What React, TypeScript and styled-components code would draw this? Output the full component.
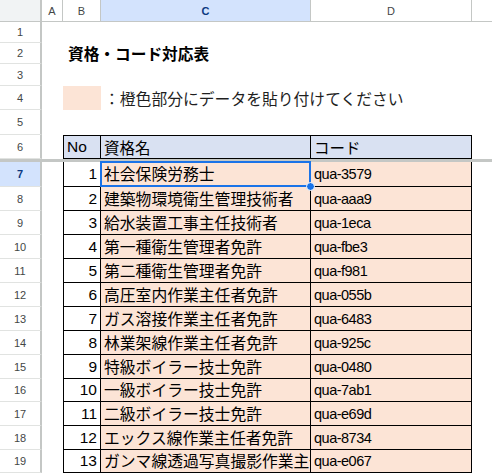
import React from 'react';
import styled, { createGlobalStyle, css } from 'styled-components';

const GlobalStyle = createGlobalStyle`
  html, body {
    margin: 0;
    padding: 0;
    background: #fff;
  }
  body {
    font-family: 'Liberation Sans', 'Noto Sans CJK JP', sans-serif;
  }
`;

const COLS = [21, 38, 210, 161, 62];
const TOP_ROWS = [21, 21, 22, 24, 25, 24];
const DATA_ROWS = [25, 24, 24, 24, 24, 24, 24, 24, 24, 23, 24, 24, 23];

const qualifications = [
  { no: 1, name: '社会保険労務士', code: 'qua-3579' },
  { no: 2, name: '建築物環境衛生管理技術者', code: 'qua-aaa9' },
  { no: 3, name: '給水装置工事主任技術者', code: 'qua-1eca' },
  { no: 4, name: '第一種衛生管理者免許', code: 'qua-fbe3' },
  { no: 5, name: '第二種衛生管理者免許', code: 'qua-f981' },
  { no: 6, name: '高圧室内作業主任者免許', code: 'qua-055b' },
  { no: 7, name: 'ガス溶接作業主任者免許', code: 'qua-6483' },
  { no: 8, name: '林業架線作業主任者免許', code: 'qua-925c' },
  { no: 9, name: '特級ボイラー技士免許', code: 'qua-0480' },
  { no: 10, name: '一級ボイラー技士免許', code: 'qua-7ab1' },
  { no: 11, name: '二級ボイラー技士免許', code: 'qua-e69d' },
  { no: 12, name: 'エックス線作業主任者免許', code: 'qua-8734' },
  { no: 13, name: 'ガンマ線透過写真撮影作業主任者免許', code: 'qua-e067' },
];

const Sheet = styled.div`
  width: 492px;
  height: 475px;
  overflow: hidden;
  display: flex;
  flex-direction: column;
  background: #fff;
`;

const Row = styled.div<{ $h: number }>`
  display: flex;
  height: ${(p) => p.$h}px;
  flex: none;
`;

const Corner = styled.div`
  width: 42px;
  flex: none;
  box-sizing: border-box;
  background: #f1f3f4;
  border-right: 2px solid #c4c7c5;
  border-bottom: 1px solid #c4c7c5;
`;

const ColHead = styled.div<{ $w: number; $active?: boolean }>`
  width: ${(p) => p.$w}px;
  flex: none;
  box-sizing: border-box;
  display: flex;
  align-items: center;
  justify-content: center;
  font-family: 'Liberation Sans', Arial, sans-serif;
  font-size: 11px;
  color: #444746;
  background: ${(p) => (p.$active ? '#d3e3fd' : '#fff')};
  border-right: 1px solid #c4c7c5;
  border-bottom: 1px solid #c4c7c5;
  ${(p) =>
    p.$active &&
    css`
      color: #0b3880;
      font-weight: 700;
    `}
`;

const RowHead = styled.div<{ $active?: boolean }>`
  width: 42px;
  flex: none;
  box-sizing: border-box;
  display: flex;
  align-items: center;
  justify-content: center;
  font-family: 'Liberation Sans', Arial, sans-serif;
  font-size: 11px;
  color: #444746;
  background: ${(p) => (p.$active ? '#d3e3fd' : '#fff')};
  border-right: 2px solid #c4c7c5;
  border-bottom: 1px solid #e1e3e1;
  ${(p) =>
    p.$active &&
    css`
      color: #0b3880;
      font-weight: 700;
    `}
`;

const FreezeBar = styled.div`
  height: 3px;
  flex: none;
  background: #c4c7c5;
`;

type CellProps = {
  $w: number;
  $fill?: string;
  $table?: boolean;
  $first?: boolean;
  $top?: boolean;
  $align?: 'left' | 'right';
  $clip?: boolean;
};

const Cell = styled.div<CellProps>`
  position: relative;
  width: ${(p) => p.$w}px;
  flex: none;
  box-sizing: border-box;
  display: flex;
  align-items: center;
  justify-content: ${(p) => (p.$align === 'right' ? 'flex-end' : 'flex-start')};
  padding: 0 3px;
  white-space: nowrap;
  overflow: ${(p) => (p.$clip ? 'hidden' : 'visible')};
  background: ${(p) => p.$fill || 'transparent'};
  color: #000;
  ${(p) =>
    p.$table &&
    css`
      border-right: 1px solid #000;
      border-bottom: 1px solid #000;
    `}
  ${(p) => p.$first && 'border-left: 1px solid #000;'}
  ${(p) => p.$top && 'border-top: 1px solid #000;'}
`;

const Title = styled.span`
  font-family: 'Noto Sans CJK JP', sans-serif;
  font-size: 15.7px;
  font-weight: 700;
  padding-left: 2px;
  position: relative;
  z-index: 1;
`;

const Note = styled.span`
  font-family: 'Noto Sans CJK JP', sans-serif;
  font-size: 15.8px;
  color: #1f1f1f;
  position: relative;
  z-index: 1;
`;

const JaText = styled.span`
  font-family: 'Noto Sans CJK JP', sans-serif;
  font-size: 15.8px;
  line-height: 1;
`;

const NumText = styled.span`
  font-family: 'Liberation Sans', Arial, sans-serif;
  font-size: 15.5px;
`;

const CodeText = styled.span`
  font-family: 'Liberation Sans', Arial, sans-serif;
  font-size: 14.5px;
  letter-spacing: -0.5px;
`;

const HeadText = styled.span`
  font-family: 'Liberation Sans', 'Noto Sans CJK JP', sans-serif;
  font-size: 15.5px;
`;

const Selection = styled.div`
  position: absolute;
  left: -1px;
  top: -1px;
  right: -1px;
  bottom: -1px;
  border: 2px solid #1a73e8;
  pointer-events: none;
`;

const Handle = styled.div`
  position: absolute;
  right: -5px;
  bottom: -5px;
  width: 7px;
  height: 7px;
  border-radius: 50%;
  background: #1a73e8;
  border: 1px solid #fff;
  z-index: 2;
`;

const ORANGE = '#fce4d6';
const BLUE = '#d9e1f2';

const App = () => {
  const letters = ['A', 'B', 'C', 'D', ''];

  return (
    <>
      <GlobalStyle />
      <Sheet>
        <Row $h={22}>
          <Corner />
          {COLS.map((w, i) => (
            <ColHead key={i} $w={w} $active={letters[i] === 'C'}>
              {letters[i]}
            </ColHead>
          ))}
        </Row>

        <Row $h={TOP_ROWS[0]}>
          <RowHead>1</RowHead>
        </Row>
        <Row $h={TOP_ROWS[1]}>
          <RowHead>2</RowHead>
          <Cell $w={COLS[0]} />
          <Cell $w={COLS[1]}>
            <Title>資格・コード対応表</Title>
          </Cell>
        </Row>
        <Row $h={TOP_ROWS[2]}>
          <RowHead>3</RowHead>
        </Row>
        <Row $h={TOP_ROWS[3]}>
          <RowHead>4</RowHead>
          <Cell $w={COLS[0]} />
          <Cell $w={COLS[1]} $fill={ORANGE} />
          <Cell $w={COLS[2]}>
            <Note>：橙色部分にデータを貼り付けてください</Note>
          </Cell>
        </Row>
        <Row $h={TOP_ROWS[4]}>
          <RowHead>5</RowHead>
        </Row>
        <Row $h={TOP_ROWS[5]}>
          <RowHead>6</RowHead>
          <Cell $w={COLS[0]} />
          <Cell $w={COLS[1]} $fill={BLUE} $table $first $top>
            <HeadText>No</HeadText>
          </Cell>
          <Cell $w={COLS[2]} $fill={BLUE} $table $top>
            <HeadText>資格名</HeadText>
          </Cell>
          <Cell $w={COLS[3]} $fill={BLUE} $table $top>
            <HeadText>コード</HeadText>
          </Cell>
        </Row>

        <FreezeBar />

        {qualifications.map((q, i) => (
          <Row key={q.no} $h={DATA_ROWS[i]}>
            <RowHead $active={i === 0}>{i + 7}</RowHead>
            <Cell $w={COLS[0]} />
            <Cell $w={COLS[1]} $table $first $align="right">
              <NumText>{q.no}</NumText>
            </Cell>
            <Cell $w={COLS[2]} $fill={ORANGE} $table $clip={i !== 0}>
              <JaText>{q.name}</JaText>
              {i === 0 && (
                <>
                  <Selection />
                  <Handle />
                </>
              )}
            </Cell>
            <Cell $w={COLS[3]} $fill={ORANGE} $table $clip>
              <CodeText>{q.code}</CodeText>
            </Cell>
          </Row>
        ))}
      </Sheet>
    </>
  );
};

export default App;
